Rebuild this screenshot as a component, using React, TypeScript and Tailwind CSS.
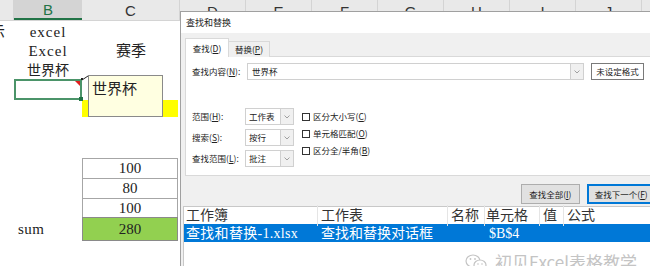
import React from "react";

const serif = { fontFamily: '"Liberation Serif", "Noto Sans CJK SC", serif' };
const ui = { fontFamily: '"Noto Sans CJK SC", "Noto Sans", sans-serif' };

const Chevron = () => (
  <svg width="6" height="4" viewBox="0 0 6 4">
    <path d="M0.5 0.5 L3 3 L5.5 0.5" fill="none" stroke="#8a8a8a" strokeWidth="0.8" />
  </svg>
);

const Key = ({ k }: { k: string }) => <span className="underline underline-offset-1">{k}</span>;

const SelectBox = ({ value }: { value: string }) => (
  <div className="flex h-[17px] w-[49px] border border-[#d0d0d0] bg-white">
    <div className="flex flex-1 items-center pl-[3px] text-[8.5px] text-[#222]">{value}</div>
    <div className="flex w-[13px] items-center justify-center border-l border-[#d0d0d0] bg-[#f0f0f0]">
      <Chevron />
    </div>
  </div>
);

const Check = ({ children }: { children: React.ReactNode }) => (
  <div className="flex h-[17px] items-center gap-[3px] text-[8.5px] text-[#222]">
    <div className="h-[8px] w-[8px] border border-[#333] bg-white" />
    <span>{children}</span>
  </div>
);

const colLetters = ["D", "E", "F", "G", "H", "I", "J", "K"];

export default function App() {
  return (
    <div className="relative h-[266px] w-[650px] overflow-hidden bg-white" style={serif}>
      {/* sheet */}
      <div className="flex flex-col">
        <div className="flex h-[21px] border-b border-[#d4d4d4] bg-[#e9e9e9] text-[15px]" style={{ fontFamily: '"Liberation Sans", sans-serif' }}>
          <div className="w-[14px] shrink-0 border-r border-[#d4d4d4]" />
          <div className="flex w-[68px] shrink-0 items-center justify-center border-b-2 border-[#217346] bg-[#d4d4d4] pt-[3px] text-[#217346]">B</div>
          <div className="flex w-[98px] shrink-0 items-center justify-center border-r border-[#d4d4d4] pt-[3px] text-[#333]">C</div>
          {colLetters.map((l) => (
            <div key={l} className="flex w-[66px] shrink-0 items-center justify-center border-r border-[#d4d4d4] pt-[4px] text-[#333]">
              {l}
            </div>
          ))}
        </div>

        <div className="flex h-[20px] items-center pt-[3px] text-[15px] text-[#222]">
          <div className="w-[14px] shrink-0 overflow-hidden whitespace-nowrap">
            <div className="-ml-[10px]">示</div>
          </div>
          <div className="w-[68px] shrink-0 text-center tracking-[1px]">excel</div>
        </div>
        <div className="flex h-[20px] items-center pt-[1px] text-[15px] text-[#222]">
          <div className="w-[14px] shrink-0" />
          <div className="w-[68px] shrink-0 text-center tracking-[1px]">Excel</div>
          <div className="w-[98px] shrink-0 text-center">赛季</div>
        </div>
        <div className="flex h-[18px] items-center text-[14px] text-[#222]">
          <div className="w-[14px] shrink-0" />
          <div className="w-[68px] shrink-0 text-center">世界杯</div>
        </div>
        <div className="flex h-[21px]">
          <div className="w-[14px] shrink-0" />
          <div className="relative w-[68px] shrink-0 border-2 border-[#4b9469]">
            <div className="absolute right-0 top-0 h-0 w-0 border-l-[5px] border-t-[5px] border-l-transparent border-t-[#e02020]" />
            <div className="absolute -bottom-[3px] -right-[3px] h-[4px] w-[4px] bg-[#217346]" />
          </div>
        </div>
        <div className="flex h-[17px]">
          <div className="w-[82px] shrink-0" />
          <div className="w-[96px] shrink-0 bg-[#ffff00]" />
        </div>
        <div className="h-[21px]" />
        <div className="h-[20px]" />
        {[
          { v: "100", h: "h-[20px]" },
          { v: "80", h: "h-[20px]" },
          { v: "100", h: "h-[19px]" },
        ].map((r, i) => (
          <div key={i} className={`flex ${r.h}`}>
            <div className="w-[82px] shrink-0" />
            <div className="flex w-[96px] shrink-0 items-center justify-center border-x border-t border-[#a6a6a6] text-[15px] text-[#222]">
              {r.v}
            </div>
          </div>
        ))}
        <div className="flex h-[24px] items-center">
          <div className="w-[14px] shrink-0" />
          <div className="w-[68px] shrink-0 pl-[4px] text-[15px] tracking-[0.5px] text-[#222]">sum</div>
          <div className="flex h-full w-[96px] shrink-0 items-center justify-center border border-[#8a8a8a] bg-[#92d050] text-[15px] text-[#222]">
            280
          </div>
        </div>
      </div>

      {/* comment */}
      <svg className="absolute left-[80px] top-[74px]" width="10" height="8">
        <line x1="2" y1="6" x2="8" y2="2" stroke="#222" strokeWidth="1" />
        <rect x="1" y="4" width="2" height="2" fill="#222" />
      </svg>
      <div className="absolute left-[88px] top-[75px] h-[42px] w-[75px] border border-[#8a8a8a] bg-[#ffffe1] pl-[3px] pt-[1px] text-[15px] text-[#222]" style={ui}>
        世界杯
      </div>

      {/* dialog */}
      <div className="absolute left-[180px] top-[11px] flex h-[255px] w-[480px] flex-col border-l border-t border-[#a0a0a0] bg-[#f0f0f0] text-[#222]" style={ui}>
        <div className="flex h-[21px] items-center bg-white pl-[5px] pt-[1px] text-[9px]">查找和替换</div>
        <div className="px-[4px]">
          <div className="mt-[5px] flex h-[19px] items-end text-[8.5px]">
            <div className="flex h-[19px] w-[44px] items-center justify-center border border-b-0 border-[#d9d9d9] bg-white">
              查找(<Key k="D" />)
            </div>
            <div className="flex h-[16px] w-[41px] items-center justify-center border-r border-t border-[#d9d9d9] bg-[#f0f0f0]">
              替换(<Key k="P" />)
            </div>
          </div>
          <div className="-mt-px h-[120px] border border-[#d9d9d9] bg-white text-[8.5px]">
            <div className="mt-[6px] flex h-[17px] items-center">
              <div className="w-[61px] pl-[6px]">
                查找内容(<Key k="N" />):
              </div>
              <div className="flex h-full w-[337px] border border-[#d0d0d0]">
                <div className="flex flex-1 items-center pl-[4px]">世界杯</div>
                <div className="flex w-[13px] items-center justify-center border-l border-[#d0d0d0] bg-[#f0f0f0]">
                  <Chevron />
                </div>
              </div>
              <div className="ml-[7px] flex h-full w-[53px] items-center justify-center border border-[#7a7a7a] bg-white">
                未设定格式
              </div>
            </div>
            <div className="mt-[28px] flex">
              <div className="flex flex-col gap-[4px]">
                {[
                  { l: "范围", k: "H", v: "工作表" },
                  { l: "搜索", k: "S", v: "按行" },
                  { l: "查找范围", k: "L", v: "批注" },
                ].map((r) => (
                  <div key={r.k} className="flex items-center">
                    <div className="w-[59px] pl-[6px]">
                      {r.l}(<Key k={r.k} />):
                    </div>
                    <SelectBox value={r.v} />
                  </div>
                ))}
              </div>
              <div className="ml-[8px] flex flex-col">
                <Check>
                  区分大小写(<Key k="C" />)
                </Check>
                <Check>
                  单元格匹配(<Key k="O" />)
                </Check>
                <Check>
                  区分全/半角(<Key k="B" />)
                </Check>
              </div>
            </div>
          </div>
          <div className="mt-[8px] flex h-[20px] pl-[336px] text-[8.5px]">
            <div className="flex w-[59px] items-center justify-center border border-[#adadad] bg-[#e1e1e1]">
              查找全部(<Key k="I" />)
            </div>
            <div className="ml-[7px] flex w-[70px] items-center justify-center border-2 border-[#0078d7] bg-[#e1e1e1]">
              查找下一个(<Key k="F" />)
            </div>
          </div>
        </div>
        <div className="ml-[2px] mt-[2px] flex-1 border-l border-t border-[#c8c8c8] bg-white text-[14px]" style={serif}>
          <div className="flex h-[17px] items-center text-[#333]">
            <div className="w-[134px] shrink-0 border-r border-[#e5e5e5] pl-[2px]">工作簿</div>
            <div className="w-[130px] shrink-0 border-r border-[#e5e5e5] pl-[3px]">工作表</div>
            <div className="w-[37px] shrink-0 border-r border-[#e5e5e5] pl-[3px]">名称</div>
            <div className="w-[55px] shrink-0 border-r border-[#e5e5e5] pl-[1px]">单元格</div>
            <div className="w-[24px] shrink-0 border-r border-[#e5e5e5] pl-[3px]">值</div>
            <div className="pl-[3px]">公式</div>
          </div>
          <div className="flex h-[18px] items-center whitespace-nowrap bg-[#0078d7] text-white">
            <div className="w-[134px] shrink-0 pl-[2px] tracking-[0.3px]">查找和替换-1.xlsx</div>
            <div className="w-[130px] shrink-0 pl-[3px]">查找和替换对话框</div>
            <div className="w-[37px] shrink-0" />
            <div className="pl-[4px]">$B$4</div>
          </div>
        </div>
      </div>

      {/* watermark */}
      <div className="absolute left-[465px] top-[249px] flex items-center gap-[8px] text-[17px] text-[#c4c4c4]" style={ui}>
        <svg width="22" height="18" viewBox="0 0 22 18">
          <ellipse cx="8" cy="8" rx="7" ry="6" fill="none" stroke="#c4c4c4" strokeWidth="1.2" />
          <ellipse cx="15" cy="12" rx="6" ry="5" fill="white" stroke="#c4c4c4" strokeWidth="1.2" />
          <circle cx="5.5" cy="6" r="0.9" fill="#c4c4c4" />
          <circle cx="10" cy="6" r="0.9" fill="#c4c4c4" />
          <circle cx="13" cy="11" r="0.8" fill="#c4c4c4" />
          <circle cx="17" cy="11" r="0.8" fill="#c4c4c4" />
        </svg>
        <span>初见Excel表格教学</span>
      </div>
    </div>
  );
}
